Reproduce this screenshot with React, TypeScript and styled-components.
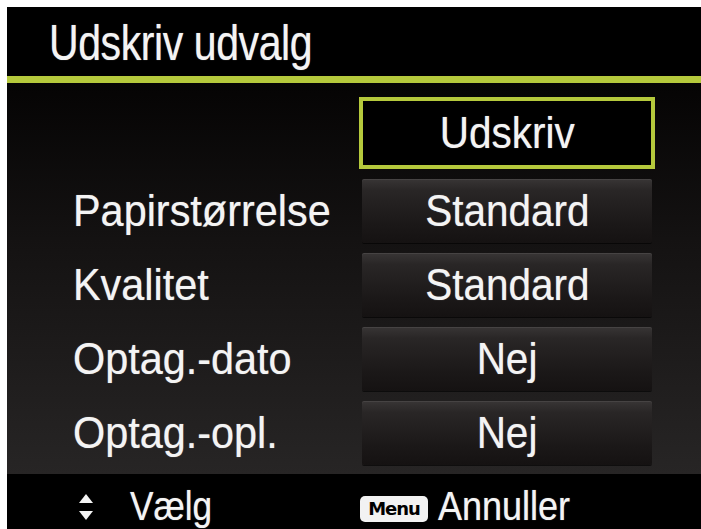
import React from "react";
import styled, { createGlobalStyle } from "styled-components";

const GlobalStyle = createGlobalStyle`
  html, body {
    margin: 0;
    padding: 0;
    background: #ffffff;
  }
  body {
    font-family: "Liberation Sans", Arial, sans-serif;
  }
`;

const GREEN = "#b5c93c";

const Screen = styled.div`
  margin: 7px 0 0 7px;
  width: 694px;
  height: 522px;
  background: #000;
  display: flex;
  flex-direction: column;
  color: #f4f4f4;
  overflow: hidden;
  text-shadow: 0 0 1px rgba(255, 255, 255, 0.55);
`;

const Header = styled.div`
  height: 69px;
  flex: none;
  display: flex;
  align-items: center;
  padding-left: 42px;
  border-bottom: 7px solid ${GREEN};
  box-sizing: content-box;
`;

// the camera font is tall and narrow, so each text is squeezed a little
const Squeeze = styled.span<{ $x: number; $origin?: string }>`
  display: inline-block;
  white-space: nowrap;
  transform: scaleX(${(p) => p.$x});
  transform-origin: ${(p) => p.$origin ?? "left"} center;
`;

const Title = styled(Squeeze)`
  font-size: 50px;
  letter-spacing: -0.5px;
  margin-top: 2px;
`;

const Body = styled.div`
  flex: 1;
  display: flex;
  flex-direction: column;
  gap: 10px;
  padding: 14px 0 9px;
  background: linear-gradient(180deg, #050404 0%, #141212 40%, #272525 100%);
`;

const Row = styled.div<{ $tall?: boolean }>`
  display: grid;
  grid-template-columns: 352px 296px;
  height: ${(p) => (p.$tall ? "72px" : "64px")};
`;

const Label = styled.div`
  display: flex;
  align-items: center;
  padding-left: 66px;
  font-size: 45px;
`;

const ValueBox = styled.div<{ $selected?: boolean }>`
  display: flex;
  align-items: center;
  justify-content: center;
  box-sizing: border-box;
  font-size: 44px;
  ${(p) =>
    p.$selected
      ? `
    background: #000;
    border: 4px solid ${GREEN};
  `
      : `
    margin: 0 3px;
    border-radius: 2px;
    background: linear-gradient(180deg, #383535 0%, #292626 18%, #1b1818 70%, #151212 100%);
    box-shadow: inset 0 1px 0 rgba(255,255,255,0.08), 0 1px 0 rgba(0,0,0,0.6);
  `}
`;

const Footer = styled.div`
  flex: none;
  height: 57px;
  background: #000;
  display: flex;
  align-items: center;
  padding: 8px 0 0 71px;
  box-sizing: border-box;
`;

const ArrowBox = styled.div`
  flex: none;
  display: flex;
  margin-right: 36px;
`;

const Hint = styled.div<{ $width?: number }>`
  display: flex;
  align-items: center;
  ${(p) => (p.$width ? `width: ${p.$width}px;` : "")}
  gap: 10px;
  font-size: 40px;
  white-space: nowrap;
`;

const MenuBadge = styled.span`
  display: inline-flex;
  align-items: center;
  justify-content: center;
  width: 68px;
  height: 26px;
  border-radius: 5px;
  background: #f2f2f2;
  color: #000;
  text-shadow: none;
  font-family: "DejaVu Sans", sans-serif;
  font-weight: 900;
  font-size: 18px;
  letter-spacing: -1px;
  margin-top: 4px;
`;

const rows = [
  { label: "Papirstørrelse", value: "Standard" },
  { label: "Kvalitet", value: "Standard" },
  { label: "Optag.-dato", value: "Nej" },
  { label: "Optag.-opl.", value: "Nej" },
];

const UpDown = () => (
  <svg width="16" height="30" viewBox="0 0 16 30">
    <polygon points="8,2 15,11 1,11" fill="#f4f4f4" />
    <polygon points="1,19 15,19 8,28" fill="#f4f4f4" />
  </svg>
);

export default function App() {
  return (
    <>
      <GlobalStyle />
      <Screen>
        <Header>
          <Title $x={0.82}>Udskriv udvalg</Title>
        </Header>
        <Body>
          <Row $tall>
            <Label />
            <ValueBox $selected>
              <Squeeze $x={0.92} $origin="center">Udskriv</Squeeze>
            </ValueBox>
          </Row>
          {rows.map((r, i) => (
            <Row key={i}>
              <Label>
                <Squeeze $x={0.92}>{r.label}</Squeeze>
              </Label>
              <ValueBox>
                <Squeeze $x={0.92} $origin="center">{r.value}</Squeeze>
              </ValueBox>
            </Row>
          ))}
        </Body>
        <Footer>
          <ArrowBox>
            <UpDown />
          </ArrowBox>
          <Hint $width={230}>
            <Squeeze $x={0.88}>Vælg</Squeeze>
          </Hint>
          <Hint>
            <MenuBadge>Menu</MenuBadge>
            <Squeeze $x={0.9}>Annuller</Squeeze>
          </Hint>
        </Footer>
      </Screen>
    </>
  );
}
